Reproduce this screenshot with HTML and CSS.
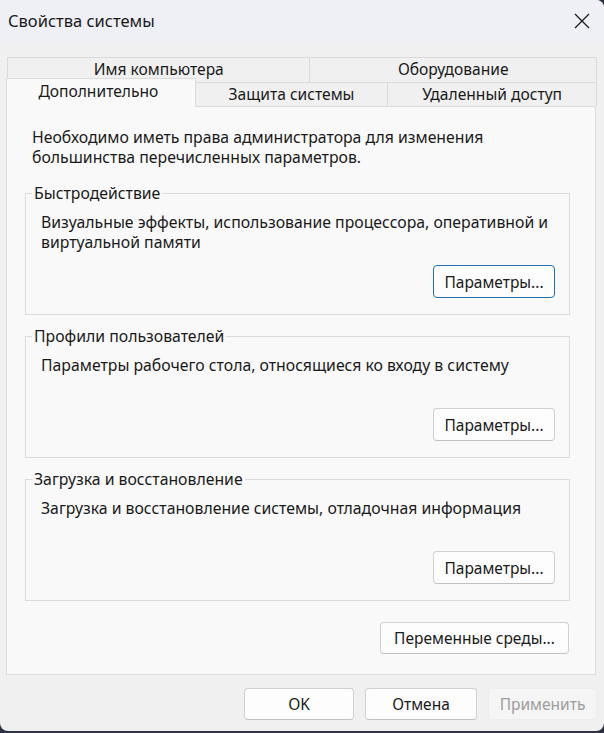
FILE: index.html
```html
<!DOCTYPE html>
<html lang="ru">
<head>
    <meta charset="UTF-8">
    <meta name="viewport" content="width=device-width, initial-scale=1.0">
    <title>Свойства системы</title>
    <link rel="stylesheet" href="styles.css">
</head>
<body>
    <div class="window">
        <header class="titlebar">
            <span class="titlebar__text">Свойства системы</span>
            <button class="titlebar__close" aria-label="Закрыть">
                <svg width="16" height="16" viewBox="0 0 16 16">
                    <path d="M1 1 L15 15 M15 1 L1 15" stroke="#1b1b1b" stroke-width="1.3" fill="none"/>
                </svg>
            </button>
        </header>

        <div class="tabs">
            <div class="tabs__row tabs__row--back">
                <div class="tab tab--w1">Имя компьютера</div>
                <div class="tab tab--w2">Оборудование</div>
            </div>
            <div class="tabs__row tabs__row--front">
                <div class="tab tab--active">Дополнительно</div>
                <div class="tab tab--w3">Защита системы</div>
                <div class="tab tab--w4">Удаленный доступ</div>
            </div>
        </div>

        <section class="panel">
            <p class="panel__intro">Необходимо иметь права администратора для изменения<br>большинства перечисленных параметров.</p>

            <div class="group">
                <span class="group__title">Быстродействие</span>
                <p class="group__text">Визуальные эффекты, использование процессора, оперативной и<br>виртуальной памяти</p>
                <button class="btn btn--params btn--default">Параметры...</button>
            </div>

            <div class="group">
                <span class="group__title">Профили пользователей</span>
                <p class="group__text">Параметры рабочего стола, относящиеся ко входу в систему</p>
                <button class="btn btn--params">Параметры...</button>
            </div>

            <div class="group">
                <span class="group__title">Загрузка и восстановление</span>
                <p class="group__text">Загрузка и восстановление системы, отладочная информация</p>
                <button class="btn btn--params">Параметры...</button>
            </div>

            <div class="panel__footer">
                <button class="btn btn--env">Переменные среды...</button>
            </div>
        </section>

        <footer class="actions">
            <button class="btn btn--ok">OK</button>
            <button class="btn btn--cancel">Отмена</button>
            <button class="btn btn--apply" disabled>Применить</button>
        </footer>
    </div>
</body>
</html>
```

FILE: styles.css
```css
   *,
   *:before,
   *:after{
       box-sizing: border-box;
   }

   html, body{
       margin: 0;
       padding: 0;
   }

   body{
       background: #2c3242;
       font-family: "Noto Sans", "Open Sans", sans-serif;
       font-size: 15.8px;
       color: #1a1a1a;
   }

   .window{
       width: 604px;
       height: 731px;
       background: #f0f0f0;
       border-radius: 0 8px 8px 8px;
       overflow: hidden;
       display: flex;
       flex-direction: column;
   }

   /* barra de titulo */
   .titlebar{
       height: 42px;
       background: #eef0f6;
       display: flex;
       align-items: center;
       justify-content: space-between;
       padding: 0 14px 0 8px;
   }

   .titlebar__text{
       font-size: 16.5px;
       line-height: 20px;
   }

   .titlebar__close{
       width: 16px;
       height: 16px;
       padding: 0;
       border: none;
       background: transparent;
       display: flex;
   }

   /* pestañas */
   .tabs{
       margin-top: 15px;
       padding: 0 7px;
       position: relative;
       z-index: 2;
       font-size: 15.6px;
   }

   .tabs__row{
       display: flex;
   }

   .tab{
       height: 25px;
       line-height: 23px;
       text-align: center;
       background: #f0f0f0;
       border: 1px solid #dadada;
       border-bottom: none;
       margin-left: -1px;
   }

   .tab:first-child{
       margin-left: 0;
   }

   .tab--w1{ width: 304px; }
   .tab--w2{ width: 288px; }

   .tabs__row--front{
       height: 24px;
       align-items: flex-end;
   }

   .tabs__row--front .tab{
       height: 24px;
       line-height: 22px;
   }

   .tab--w3{ width: 194px; }
   .tab--w4{ width: 210px; }

   .tab.tab--active{
       width: 190px;
       height: 29px;
       margin: 0 0 -1px -1px;
       padding: 1px 5px 0 0;
       background: #f9f9f9;
       border-color: #dcdcdc;
   }

   /* panel principal */
   .panel{
       margin: 0 8px 0 6px;
       height: 569px;
       background: #f9f9f9;
       border: 1px solid #dcdcdc;
       padding: 20px 25px 0 18px;
   }

   .panel__intro{
       margin: 0 0 26px 7px;
       line-height: 20px;
   }

   .group{
       width: 545px;
       height: 122px;
       margin-bottom: 21px;
       border: 1px solid #dcdcdc;
       display: flex;
       flex-direction: column;
       align-items: flex-start;
       padding: 0 14px 16px 15px;
   }

   .group__title{
       margin: -11px 0 0 -9px;
       padding: 0 2px;
       line-height: 20px;
       background: #f9f9f9;
   }

   .group__text{
       margin: 9px 0 0;
       line-height: 20px;
   }

   .btn{
       font-family: inherit;
       font-size: 15.5px;
       color: #1a1a1a;
       height: 32px;
       padding: 0;
       background: #fdfdfd;
       border: 1px solid #d0d0d0;
       border-bottom-color: #c2c2c2;
       border-radius: 4px;
   }

   .btn--params{
       width: 122px;
       height: 33px;
       margin-top: auto;
       align-self: flex-end;
   }

   .btn--default{
       border: 1px solid #1f6fb5;
   }

   .panel__footer{
       display: flex;
       justify-content: flex-end;
   }

   .btn--env{
       width: 189px;
       margin-right: 1px;
   }

   /* botones inferiores */
   .actions{
       display: flex;
       justify-content: flex-end;
       gap: 11px;
       padding: 13px 7px 0 0;
   }

   .btn--ok{ width: 110px; }
   .btn--cancel{ width: 112px; }

   .btn--apply{
       width: 109px;
       color: #9d9d9d;
       background: #f5f5f5;
       border-color: #ececec;
   }
```
